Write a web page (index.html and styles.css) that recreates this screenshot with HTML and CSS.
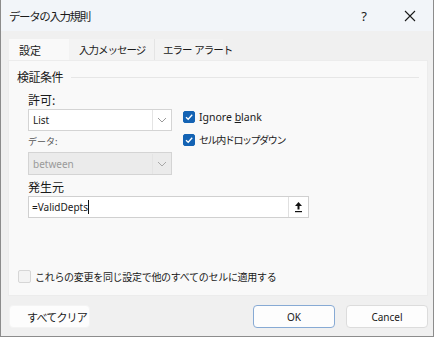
FILE: index.html
```html
<!DOCTYPE html>
<html lang="ja">
<head>
    <meta charset="UTF-8">
    <title>データの入力規則</title>
    <link rel="stylesheet" href="styles.css">
</head>
<body>
    <div class="dialog">
        <header class="titlebar">
            <span class="title">データの入力規則</span>
            <span class="help">?</span>
            <span class="close">
                <svg width="12" height="12" viewBox="0 0 12 12"><path d="M1 1 L11 11 M11 1 L1 11" stroke="#1a1a1a" stroke-width="1.1" fill="none"/></svg>
            </span>
        </header>

        <div class="content">
            <div class="tabs">
                <div class="tab active">設定</div>
                <div class="tab second">入力メッセージ</div>
                <div class="tab third">エラー&nbsp;&nbsp;アラート</div>
            </div>

            <div class="panel">
                <div class="group-title">
                    <span>検証条件</span>
                    <span class="rule"></span>
                </div>

                <div class="criteria">
                    <div class="left-col">
                        <div class="label bold">許可:</div>
                        <div class="select">
                            <span class="value">List</span>
                            <span class="arrow">
                                <svg width="10" height="6" viewBox="0 0 10 6"><path d="M1 1 L5 5 L9 1" stroke="#9a9a9a" fill="none"/></svg>
                            </span>
                        </div>
                        <div class="label small">データ:</div>
                        <div class="select disabled">
                            <span class="value">between</span>
                            <span class="arrow">
                                <svg width="10" height="6" viewBox="0 0 10 6"><path d="M1 1 L5 5 L9 1" stroke="#a8a8a8" fill="none"/></svg>
                            </span>
                        </div>
                    </div>
                    <div class="right-col">
                        <label class="check">
                            <span class="box checked">
                                <svg width="10" height="10" viewBox="0 0 10 10"><path d="M2 5.2 L4.2 7.3 L8.2 2.8" stroke="#fff" stroke-width="1.3" fill="none"/></svg>
                            </span>
                            <span>Ignore <u>b</u>lank</span>
                        </label>
                        <label class="check jp">
                            <span class="box checked">
                                <svg width="10" height="10" viewBox="0 0 10 10"><path d="M2 5.2 L4.2 7.3 L8.2 2.8" stroke="#fff" stroke-width="1.3" fill="none"/></svg>
                            </span>
                            <span>セル内ドロップダウン</span>
                        </label>
                    </div>
                </div>

                <div class="source">
                    <div class="label bold">発生元</div>
                    <div class="input">
                        <span class="value">=ValidDepts<span class="caret"></span></span>
                        <span class="collapse">
                            <svg width="9" height="12" viewBox="0 0 9 12"><path d="M4.5 1 L1 5 H3.5 V8.5 H5.5 V5 H8 Z" fill="#111"/><rect x="1" y="10" width="7" height="1.2" fill="#111"/></svg>
                        </span>
                    </div>
                </div>

                <label class="check apply">
                    <span class="box"></span>
                    <span>これらの変更を同じ設定で他のすべてのセルに適用する</span>
                </label>
            </div>

            <div class="buttons">
                <button type="button" class="btn clear">すべてクリア</button>
                <div class="right-buttons">
                    <button type="button" class="btn default">OK</button>
                    <button type="button" class="btn">Cancel</button>
                </div>
            </div>
        </div>
    </div>
</body>
</html>
```

FILE: styles.css
```css
body {
    margin: 0;
    padding: 0;
    font-family: "Noto Sans", "Noto Sans CJK JP", sans-serif;
    font-size: 10px;
    color: #1a1a1a;
    background-color: #ffffff;
}
.dialog {
    width: 434px;
    height: 337px;
    box-sizing: border-box;
    background-color: #f0f0f0;
    border: 1px solid #8c8c8c;
    border-top: none;
    display: flex;
    flex-direction: column;
}
.titlebar {
    height: 31px;
    display: flex;
    align-items: center;
    background-color: #f2f5f9;
    padding-left: 8px;
}
.titlebar .title {
    flex: 1;
    font-size: 11.5px;
    letter-spacing: -1.4px;
    font-family: "Noto Sans CJK JP", sans-serif;
}
.titlebar .help {
    width: 46px;
    text-align: center;
    font-size: 13px;
}
.titlebar .close {
    width: 46px;
    display: flex;
    justify-content: center;
}
.content {
    flex: 1;
    padding: 8px 5px 0 7px;
    display: flex;
    flex-direction: column;
}
.tabs {
    display: flex;
    height: 21px;
    padding-left: 1px;
}
.tab {
    font-family: "Noto Sans CJK JP", sans-serif;
    font-size: 10.5px;
    letter-spacing: -1px;
    white-space: nowrap;
    box-sizing: border-box;
    display: flex;
    align-items: center;
    background-color: #f3f3f3;
}
.tab.active {
    background-color: #f9f9f9;
    width: 60px;
    padding-left: 10px;
    font-size: 11px;
    letter-spacing: 0;
}
.tab.second {
    width: 86px;
    padding-left: 10px;
    border-right: 1px solid #e4e4e4;
}
.tab.third {
    width: 68px;
    padding-left: 8px;
}
.panel {
    height: 236px;
    box-sizing: border-box;
    background-color: #f9f9f9;
    border: 1px solid #ececec;
    padding: 7px 8px 0 8px;
    display: flex;
    flex-direction: column;
}
.group-title {
    display: flex;
    align-items: center;
    gap: 8px;
    font-family: "Noto Sans CJK JP", sans-serif;
    font-size: 12px;
    letter-spacing: -0.5px;
}
.group-title .rule {
    flex: 1;
    height: 1px;
    background-color: #e6e6e6;
    margin-top: 2px;
}
.criteria {
    display: flex;
    padding-left: 11px;
    margin-top: 6px;
}
.left-col {
    width: 144px;
}
.label {
    font-family: "Noto Sans CJK JP", sans-serif;
}
.label.bold {
    font-size: 12px;
    height: 18px;
    line-height: 18px;
}
.label.small {
    font-size: 9px;
    color: #555;
    height: 21px;
    line-height: 22px;
}
.select {
    height: 22px;
    box-sizing: border-box;
    background-color: #ffffff;
    border: 1px solid #d4d4d4;
    display: flex;
    align-items: center;
}
.select .value {
    flex: 1;
    padding-left: 4px;
}
.select .arrow {
    width: 18px;
    height: 20px;
    border-left: 1px solid #e4e4e4;
    display: flex;
    align-items: center;
    justify-content: center;
}
.select.disabled {
    background-color: #ebebeb;
    color: #9a9a9a;
    height: 23px;
}
.right-col {
    margin-left: 11px;
    padding-top: 19px;
    display: flex;
    flex-direction: column;
    gap: 8px;
}
.check {
    display: flex;
    align-items: center;
    gap: 4px;
    font-family: "Noto Sans", "Noto Sans CJK JP", sans-serif;
    font-size: 10.5px;
}
.check.jp {
    font-family: "Noto Sans CJK JP", sans-serif;
    font-size: 10px;
    letter-spacing: -1.4px;
}
.box {
    width: 12px;
    height: 12px;
    flex: none;
    box-sizing: border-box;
    border-radius: 2px;
    border: 1px solid #c8c8c8;
    background-color: #f4f4f4;
    display: flex;
    align-items: center;
    justify-content: center;
}
.box.checked {
    background-color: #1463b4;
    border-color: #1463b4;
}
.source {
    padding-left: 11px;
    margin-top: 3px;
}
.input {
    width: 281px;
    height: 22px;
    box-sizing: border-box;
    background-color: #ffffff;
    border: 1px solid #d0d0d0;
    display: flex;
    align-items: center;
}
.input .value {
    flex: 1;
    padding-left: 3px;
    display: flex;
    align-items: center;
}
.caret {
    display: inline-block;
    width: 1px;
    height: 14px;
    background-color: #111;
}
.collapse {
    width: 19px;
    height: 20px;
    border-left: 1px solid #e0e0e0;
    display: flex;
    align-items: center;
    justify-content: center;
}
.check.apply {
    margin-top: 51px;
    margin-left: 1px;
    font-family: "Noto Sans CJK JP", sans-serif;
    font-size: 10px;
    letter-spacing: -0.3px;
}
.check.apply .box {
    width: 13px;
    height: 13px;
    background-color: #f3f3f3;
    border-color: #d6d6d6;
}
.buttons {
    display: flex;
    justify-content: space-between;
    margin-top: 9px;
    padding-left: 1px;
}
.right-buttons {
    display: flex;
    gap: 11px;
}
.btn {
    height: 23px;
    width: 82px;
    background-color: #fdfdfd;
    border: 1px solid #dcdcdc;
    border-radius: 4px;
    font-family: "Noto Sans", "Noto Sans CJK JP", sans-serif;
    font-size: 10px;
    color: #1a1a1a;
}
.btn.clear {
    width: 81px;
    font-size: 11px;
    letter-spacing: -0.8px;
    font-family: "Noto Sans CJK JP", sans-serif;
    text-align: right;
    padding-right: 2px;
    border-color: #f4f4f4;
}
.btn.default {
    border-color: #87aad4;
}
```
